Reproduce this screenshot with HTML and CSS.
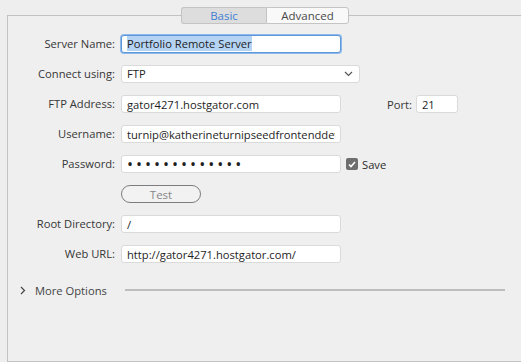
FILE: index.html
```html
<!DOCTYPE html>
<html lang="en">
<head>
  <meta charset="UTF-8">
  <title>Server Setup</title>
  <link rel="stylesheet" href="styles.css">
</head>
<body>
  <fieldset class="panel">
    <legend class="tabs">
      <span class="tab tab-active">Basic</span>
      <span class="tab">Advanced</span>
    </legend>

    <div class="form">
      <label class="label">Server Name:</label>
      <div class="cell">
        <div class="field field-focus"><span class="selected">Portfolio Remote Server</span></div>
      </div>

      <label class="label">Connect using:</label>
      <div class="cell">
        <div class="field select">
          <span>FTP</span>
          <svg width="9" height="6" viewBox="0 0 9 6"><path d="M1 1 L4.5 4.5 L8 1" fill="none" stroke="#555" stroke-width="1.2"/></svg>
        </div>
      </div>

      <label class="label">FTP Address:</label>
      <div class="cell">
        <input class="field" type="text" value="gator4271.hostgator.com">
        <span class="port-label">Port:</span>
        <input class="field port" type="text" value="21">
      </div>

      <label class="label">Username:</label>
      <div class="cell">
        <input class="field" type="text" value="turnip@katherineturnipseedfrontenddev">
      </div>

      <label class="label">Password:</label>
      <div class="cell">
        <input class="field password" type="password" value="turnipturnip1">
        <span class="check">
          <svg width="8" height="7" viewBox="0 0 8 7"><path d="M1 3.5 L3 5.5 L7 1" fill="none" stroke="#fff" stroke-width="1.6"/></svg>
        </span>
        <span class="check-label">Save</span>
      </div>

      <span class="label"></span>
      <div class="cell">
        <button class="test-button">Test</button>
      </div>

      <label class="label">Root Directory:</label>
      <div class="cell">
        <input class="field" type="text" value="/">
      </div>

      <label class="label">Web URL:</label>
      <div class="cell">
        <input class="field" type="text" value="http://gator4271.hostgator.com/">
      </div>
    </div>

    <div class="more">
      <svg width="6" height="9" viewBox="0 0 6 9"><path d="M1 1 L4.5 4.5 L1 8" fill="none" stroke="#444" stroke-width="1.2"/></svg>
      <span class="more-text">More Options</span>
      <span class="more-line"></span>
    </div>
  </fieldset>
</body>
</html>
```

FILE: styles.css
```css
* {
  box-sizing: border-box;
}

html, body {
  margin: 0;
  width: 521px;
  height: 362px;
  overflow: hidden;
}

body {
  background: #eeeeee;
  font-family: "Open Sans", "Noto Sans", sans-serif;
  font-size: 11.2px;
  color: #333;
  padding: 7px 0 0 7px;
}

.panel {
  width: 516px;
  height: 355px;
  margin: 0;
  padding: 0;
  border: 1px solid #c2c2c2;
  background: #efefef;
}

.tabs {
  display: flex;
  margin-left: 173px;
  padding: 0;
}

.tab {
  width: 83px;
  height: 17px;
  line-height: 15px;
  font-size: 11.5px;
  text-align: center;
  border: 1px solid #c4c4c4;
  background: #f9f9f9;
  color: #4a4a4a;
  border-radius: 0 3px 3px 0;
}

.tab-active {
  width: 85px;
  background: #dddddd;
  color: #3f80d4;
  border-right: none;
  border-radius: 3px 0 0 3px;
}

.form {
  display: grid;
  grid-template-columns: 107px auto;
  column-gap: 6px;
  row-gap: 12px;
  padding-top: 11px;
}

.label {
  text-align: right;
  line-height: 18px;
  color: #363636;
}

.cell {
  display: flex;
  align-items: center;
  height: 18px;
}

.field {
  width: 220px;
  height: 18px;
  margin: 0;
  padding: 0 5px;
  border: 1px solid #dadada;
  border-radius: 3px;
  background: #fff;
  font-family: inherit;
  font-size: 11.2px;
  color: #1e1e1e;
  line-height: 16px;
  outline: none;
}

.field-focus {
  border: 1px solid #5b97da;
  box-shadow: 0 0 0 1px #8fb9e8;
  white-space: nowrap;
}

.selected {
  background: #b5d4f4;
}

.select {
  width: 239px;
  display: flex;
  align-items: center;
  justify-content: space-between;
  padding-right: 6px;
}

.port-label {
  margin-left: 46px;
  margin-right: 4px;
  color: #363636;
}

.port {
  width: 42px;
}

.password {
  font-size: 16px;
  letter-spacing: 3px;
}

.check {
  width: 12px;
  height: 12px;
  margin-left: 5px;
  border-radius: 2px;
  background: #6e6e6e;
  display: flex;
  align-items: center;
  justify-content: center;
}

.check-label {
  margin-left: 4px;
  color: #2c2c2c;
}

.test-button {
  width: 80px;
  height: 18px;
  padding: 0;
  border: 1px solid #7d7d7d;
  border-radius: 9px;
  background: #f2f2f2;
  font-family: inherit;
  font-size: 11.5px;
  color: #868686;
}

.more {
  display: flex;
  align-items: center;
  margin-top: 19px;
  padding-left: 12px;
  padding-right: 17px;
  height: 16px;
}

.more-text {
  margin-left: 9px;
  color: #444;
}

.more-line {
  flex: 1;
  height: 2px;
  margin-left: 18px;
  background: #bdbdbd;
}
```
